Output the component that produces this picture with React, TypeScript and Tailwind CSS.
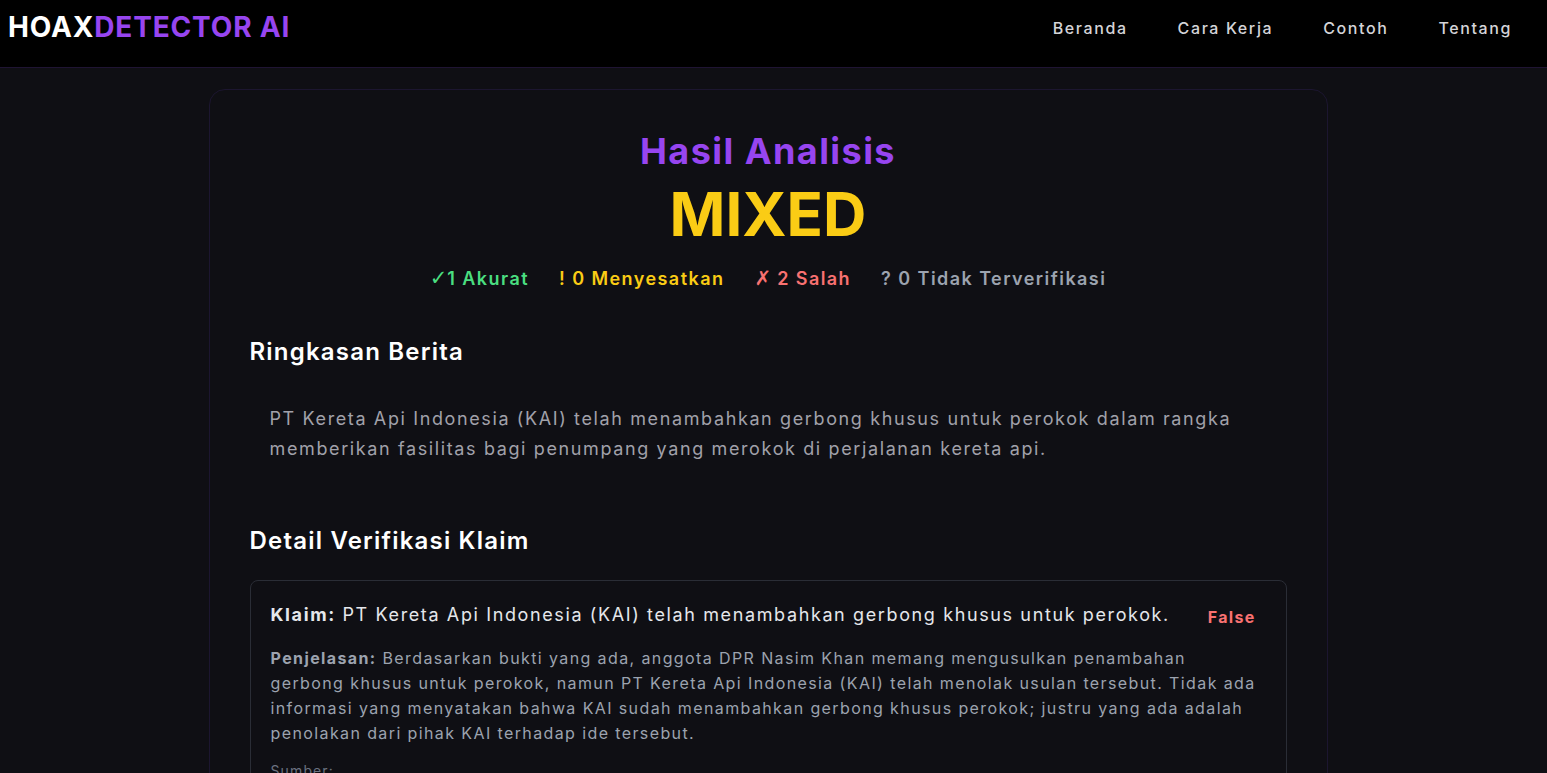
export default function App() {
  return (
    <div className="min-h-screen bg-[#0f0f14] font-['Inter',sans-serif] text-white">
      <header className="h-[68px] border-b border-[#1f1433] bg-black pl-2 pr-[35px] pt-[13px]">
        <div className="flex h-[28px] items-center justify-between">
          <div className="text-[28px] font-bold tracking-[0.03em] leading-[28px]">
            <span className="text-white">HOAX</span>
            <span className="text-[#9745f0]">DETECTOR AI</span>
          </div>
          <nav className="flex items-center gap-[50px] pt-[2px] text-[16px] font-medium tracking-[0.1em] text-[#d4d4d8]">
            <span>Beranda</span>
            <span>Cara Kerja</span>
            <span>Contoh</span>
            <span>Tentang</span>
          </nav>
        </div>
      </header>
      <main className="flex justify-center pr-[11px] pt-[21px]">
        <div className="w-[1119px] rounded-2xl border border-[#1c1630] bg-[#0f0f14] px-10 pt-[41px] pb-10">
          <div className="text-center">
            <h1 className="text-[36px] font-bold leading-[40px] tracking-[0.04em] text-[#9745f0]">Hasil Analisis</h1>
            <div className="mt-[13px] text-[60px] font-bold leading-[60px] text-[#facc15]">MIXED</div>
            <div className="mt-[21px] flex h-[28px] items-center justify-center gap-[30px] text-[18px] font-semibold leading-[28px] tracking-[0.08em]">
              <span className="text-[#4ade80]">
                <span className="font-['DejaVu_Sans'] text-[21px] font-bold leading-none tracking-normal">✓</span>1 Akurat
              </span>
              <span className="text-[#facc15]">! 0 Menyesatkan</span>
              <span className="text-[#f87171]">
                <span className="font-['DejaVu_Sans'] text-[20px] font-normal leading-none tracking-normal">✗</span> 2 Salah
              </span>
              <span className="text-[#9ca3af]">? 0 Tidak Terverifikasi</span>
            </div>
          </div>
          <h2 className="mt-[43px] text-[24px] font-semibold leading-[32px] tracking-[0.05em] text-white">Ringkasan Berita</h2>
          <p className="mt-[36px] px-5 text-[18px] leading-[30px] tracking-[0.09em] text-[#a1a1aa]">
            PT Kereta Api Indonesia (KAI) telah menambahkan gerbong khusus untuk perokok dalam rangka memberikan fasilitas bagi penumpang yang merokok di perjalanan kereta api.
          </p>
          <h2 className="mt-[61px] text-[24px] font-semibold leading-[32px] tracking-[0.05em] text-white">Detail Verifikasi Klaim</h2>
          <div className="mt-[23px] rounded-lg border border-[#2a2d36] p-5">
            <div className="flex items-start justify-between gap-4">
              <p className="text-[18px] leading-[28px] tracking-[0.09em] text-[#e5e7eb]">
                <span className="font-bold">Klaim:</span> PT Kereta Api Indonesia (KAI) telah menambahkan gerbong khusus untuk perokok.
              </p>
              <span className="mr-[10px] shrink-0 pt-[2px] text-[16px] font-bold leading-[28px] tracking-[0.08em] text-[#f87171]">False</span>
            </div>
            <p className="mt-[15px] text-[16px] leading-[25px] tracking-[0.087em] text-[#9ca3af]">
              <span className="font-bold">Penjelasan:</span> Berdasarkan bukti yang ada, anggota DPR Nasim Khan memang mengusulkan penambahan gerbong khusus untuk perokok, namun PT Kereta Api Indonesia (KAI) telah menolak usulan tersebut. Tidak ada informasi yang menyatakan bahwa KAI sudah menambahkan gerbong khusus perokok; justru yang ada adalah penolakan dari pihak KAI terhadap ide tersebut.
            </p>
            <p className="mt-[15px] text-[14px] leading-[20px] tracking-[0.08em] text-[#6b7280]">Sumber:</p>
          </div>
        </div>
      </main>
    </div>
  );
}
